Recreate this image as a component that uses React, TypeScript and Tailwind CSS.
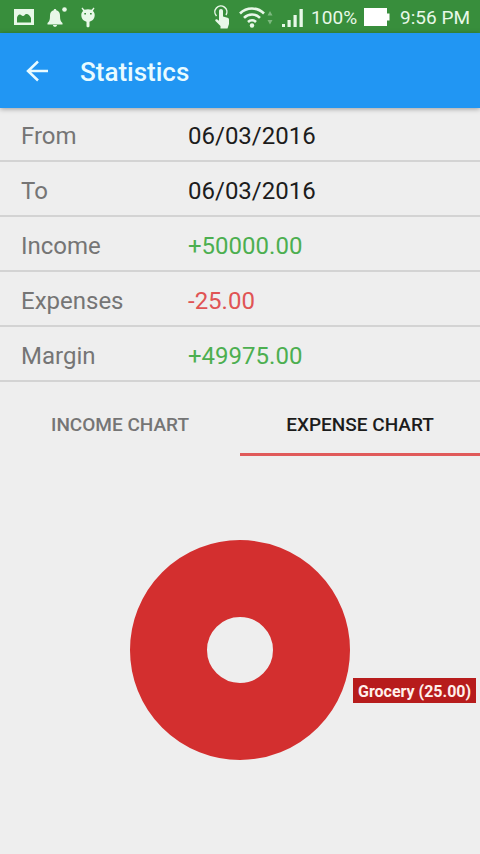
import { useState } from "react";

const summary = [
  { label: "Income", value: "+50000.00", color: "text-[#4caf50]" },
  { label: "Expenses", value: "-25.00", color: "text-[#e05454]" },
  { label: "Margin", value: "+49975.00", color: "text-[#4caf50]" },
];

const StatusBar = () => (
  <div className="flex h-[33px] items-center justify-between bg-[#388e3c] pr-[10px] pl-[14px] text-[#e8f8e8]">
    <div className="flex items-center gap-3">
      {/* screenshot */}
      <svg width="20" height="18" viewBox="0 0 20 18">
        <path
          fill="currentColor"
          fillRule="evenodd"
          d="M0 1h20v16H0zM3 14.500h14V10c-1-2.500-3-4.500-5-4-1.500.4-1.500 2-3 2S7 6 5.500 6.500 3 9 3 10z"
        />
      </svg>
      {/* notification */}
      <svg width="22" height="22" viewBox="0 0 22 22">
        <path
          fill="currentColor"
          d="M9 3c.8 0 1.300.5 1.300 1.300C13 5 14 7 14 9.500c0 4 .5 6 2.500 7.500v1.500h-15V17C3.500 15.500 4 13.500 4 9.500 4 7 5 5 7.700 4.300 7.700 3.500 8.200 3 9 3zM7 19h4c0 1-.8 1.800-2 1.800S7 20 7 19z"
        />
        <circle cx="18.500" cy="3.500" r="2.300" fill="currentColor" />
      </svg>
      {/* usb debugging */}
      <svg width="16" height="22" viewBox="0 0 16 22">
        <path
          fill="currentColor"
          fillRule="evenodd"
          d="M2.300 1.500 4.500 3.800c2.200-.8 4.800-.8 7 0l2.200-2.300.8.8L12.800 5c1.200 1 1.900 2.400 1.900 4 0 3.500-2.200 6-5.200 6.700v4c0 1-.6 1.500-1.500 1.500s-1.500-.5-1.500-1.500v-4C3.500 15 1.300 12.500 1.300 9c0-1.600.7-3 1.900-4L1.500 2.300zM4.300 7v1.600h1.700V7zm5.700 0v1.600h1.700V7z"
        />
      </svg>
    </div>
    <div className="flex items-center">
      {/* touch */}
      <svg width="18" height="25" viewBox="0 0 18 25">
        <path
          d="M3.500 12A6 6 0 1 1 13 11"
          fill="none"
          stroke="currentColor"
          strokeWidth="1.500"
        />
        <path
          fill="currentColor"
          d="M6 7c0-1.200.8-2 2-2s2 .8 2 2v5.500l4.500 1.200c1 .3 1.500 1 1.500 2V20l-1.500 4.500h-7V22L2.500 17c-.8-1 .2-2.300 1.500-1.700l2 1.500z"
        />
      </svg>
      {/* wifi */}
      <svg className="ml-2" width="34" height="24" viewBox="0 0 34 24">
        <g fill="none" stroke="currentColor" strokeWidth="2.600">
          <path d="M1 8.500a17 17 0 0 1 24 0" />
          <path d="M5 12.800a11.300 11.300 0 0 1 16 0" />
          <path d="M9 17a5.800 5.800 0 0 1 8 0" />
        </g>
        <circle cx="13" cy="20.500" r="2.200" fill="currentColor" />
        <path
          d="M28.500 10.500 31 6l2.500 4.500zM28.500 15 31 19.500l2.500-4.500z"
          fill="#7db97f"
        />
      </svg>
      {/* signal */}
      <svg className="ml-2" width="24" height="20" viewBox="0 0 24 20">
        <path
          fill="currentColor"
          d="M1 17h3v3H1zM6.500 13h3.200v7H6.500zM12.500 8h3.200v12h-3.200zM18.500 2h3.300v18h-3.300z"
        />
      </svg>
      <span className="ml-[6px] pt-[2px] text-[19px] leading-6">100%</span>
      {/* battery */}
      <svg className="ml-[7px]" width="26" height="18" viewBox="0 0 26 18">
        <path fill="#fff" d="M0 0h23v5.500h2.500v7H23V18H0z" />
      </svg>
      <span className="ml-[10px] pt-[2px] text-[19px] leading-6">9:56 PM</span>
    </div>
  </div>
);

const DonutChart = () => (
  <div className="relative">
    <svg width="220" height="220" viewBox="0 0 220 220">
      <circle
        cx="110"
        cy="110"
        r="71.500"
        fill="none"
        stroke="#d32f2f"
        strokeWidth="77"
      />
    </svg>
    <span className="absolute top-[138px] left-[223px] bg-[#b71c1c] px-[5px] pt-[2px] text-base leading-[23px] font-bold whitespace-nowrap text-[#fff0ec]">
      Grocery (25.00)
    </span>
  </div>
);

const App = () => {
  const [tab, setTab] = useState("expense");
  const [from] = useState("06/03/2016");
  const [to] = useState("06/03/2016");

  const tabClass = (active: boolean) =>
    active
      ? "h-16 flex-1 border-b-3 border-[#e05a5a] pt-[6px] text-[19px] font-medium text-[#1c1c1c]"
      : "h-16 flex-1 border-b-3 border-transparent pt-[6px] text-[19px] font-medium text-[#757575]";

  return (
    <div className="flex min-h-screen flex-col bg-[#eeeeee] font-[Roboto,sans-serif]">
      <StatusBar />
      <header className="relative flex h-[75px] items-center bg-[#2196f3] pl-6 text-[#e8fbff] shadow-[0_1px_5px_rgba(0,0,0,0.35)]">
        <button type="button" aria-label="Back">
          <svg width="26" height="26" viewBox="0 0 26 26">
            <path
              d="M24 13H4M14 3.500 4 13l10 9.500"
              fill="none"
              stroke="currentColor"
              strokeWidth="2.500"
            />
          </svg>
        </button>
        <h1 className="ml-[30px] pt-1 text-[26px] font-medium">Statistics</h1>
      </header>

      <table className="h-[274px] w-full border-collapse text-left text-2xl">
        <tbody>
          <tr className="border-b-2 border-[#d3d3d3]">
            <th className="w-[188px] pt-1 pl-[21px] font-normal text-[#757575]">
              From
            </th>
            <td className="pt-1 text-[#1c1c1c]">
              <button type="button">{from}</button>
            </td>
          </tr>
          <tr className="border-b-2 border-[#d3d3d3]">
            <th className="pt-1 pl-[21px] font-normal text-[#757575]">To</th>
            <td className="pt-1 text-[#1c1c1c]">
              <button type="button">{to}</button>
            </td>
          </tr>
          {summary.map((row) => (
            <tr key={row.label} className="border-b-2 border-[#d3d3d3]">
              <th className="pt-1 pl-[21px] font-normal text-[#757575]">
                {row.label}
              </th>
              <td className={`pt-1 ${row.color}`}>{row.value}</td>
            </tr>
          ))}
        </tbody>
      </table>

      <div role="tablist" className="mt-[10px] flex">
        <button
          type="button"
          role="tab"
          aria-selected={tab === "income"}
          className={tabClass(tab === "income")}
          onClick={() => setTab("income")}
        >
          INCOME CHART
        </button>
        <button
          type="button"
          role="tab"
          aria-selected={tab === "expense"}
          className={tabClass(tab === "expense")}
          onClick={() => setTab("expense")}
        >
          EXPENSE CHART
        </button>
      </div>

      <main className="flex justify-center pt-[84px]">
        {tab === "expense" && <DonutChart />}
      </main>
    </div>
  );
};

export default App;
